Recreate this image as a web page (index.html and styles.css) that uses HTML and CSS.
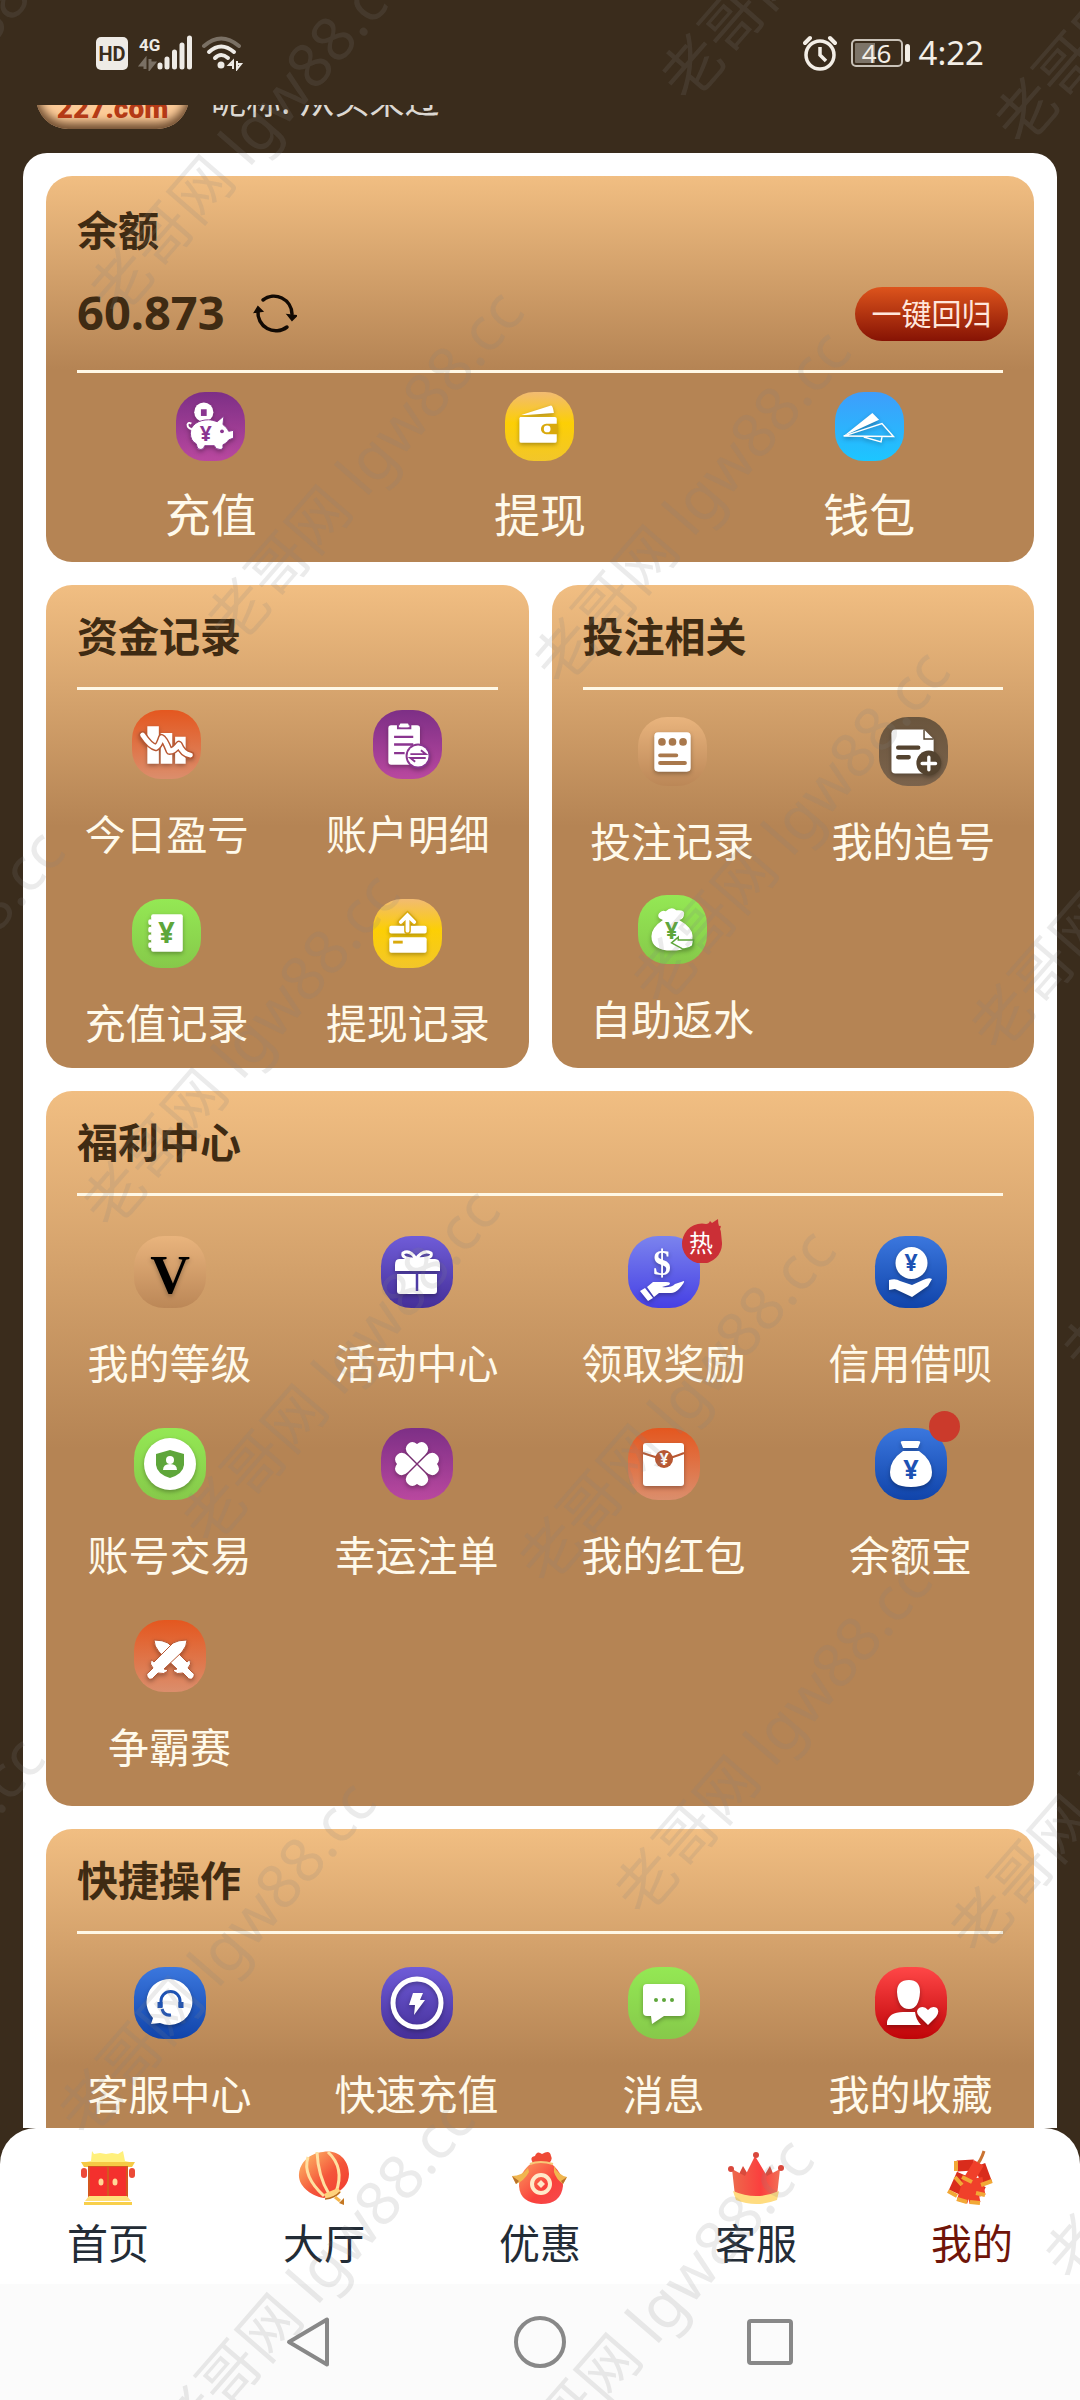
FILE: index.html
```html
<!DOCTYPE html>
<html lang="zh-CN">
<head>
<meta charset="utf-8">
<meta name="viewport" content="width=device-width, initial-scale=1">
<title>我的</title>
<link rel="stylesheet" href="styles.css">
</head>
<body>
<div class="screen">
  <header class="status">
    <div class="status-group">
      <svg class="status-icon" width="148" height="36" viewBox="0 0 148 36" role="img" aria-label="HD 4G Wi-Fi">
        <rect x="0" y="2" width="32" height="33" rx="5" fill="#eeebe6"/>
        <text class="hd" x="16" y="26" text-anchor="middle">HD</text>
        <text class="net" x="43" y="16">4G</text>
        <path d="M49 34V25L45 30H49M54 24V33L58 28H54" stroke="#7a7064" stroke-width="3" fill="none"/>
        <path d="M64 32V30M71 32V24M78.500 32V17M86 32V10M93.500 32V3" stroke="#eeebe6" stroke-width="5" stroke-linecap="round"/>
        <path d="M108 11Q125-4 143 11" stroke="#7a7064" stroke-width="4" fill="none" stroke-linecap="round"/>
        <path d="M113 17Q125 6 138 17M119 23Q125 17 132 23" stroke="#eeebe6" stroke-width="4" fill="none" stroke-linecap="round"/>
        <circle cx="125" cy="30" r="3.500" fill="#eeebe6"/>
        <path d="M137 34V26L133 30H137M141 26V34L145 29H141" stroke="#eeebe6" stroke-width="2" fill="none"/>
      </svg>
    </div>
    <div class="status-group">
      <svg class="status-icon" width="34" height="36" viewBox="0 0 34 36" role="img" aria-label="闹钟">
        <circle cx="17" cy="20" r="14" fill="none" stroke="#f3eee6" stroke-width="3.500"/>
        <path d="M17 12V20L23 26" fill="none" stroke="#f3eee6" stroke-width="3.500"/>
        <path d="M2 8L7 3M27 3L32 8" stroke="#f3eee6" stroke-width="4" stroke-linecap="round"/>
      </svg>
      <div class="battery"><span class="battery-box">46</span><span class="battery-tip"></span></div>
      <span class="clock">4:22</span>
    </div>
  </header>

  <main class="scroll">
    <div class="profile">
      <div class="logo">227.com</div>
      <div class="nickname">昵称: 从头来过</div>
    </div>

    <div class="panel">
      <section class="card balance">
        <h2>余额</h2>
        <div class="balance-row">
          <strong>60.873</strong>
          <button class="refresh" type="button" aria-label="刷新">
            <svg width="44" height="44" viewBox="0 0 44 44" fill="none" stroke="#120a04" stroke-width="3.500" stroke-linecap="round">
              <path d="M10 8A18 18 0 0 1 39 22M34 35A18 18 0 0 1 5 19"/>
              <path d="M2 20L5 15L9 19ZM35 23L39 28L43 24Z" fill="#120a04" stroke-width="2"/>
            </svg>
          </button>
          <button class="recall" type="button">一键回归</button>
        </div>
        <div class="items items-3">
          <a href="#"><svg class="icon purple" viewBox="0 0 72 72"><g class="glyph">
            <circle cx="29" cy="21" r="10"/><rect x="26" y="18" width="6" height="7" fill="currentColor"/>
            <path d="M15 43C15 34 24 29 34 29C37 29 40 30 43 31L50 25L49 34C52 36 54 39 55 41L60 40V48L55 50C53 53 51 54 49 55V58Q49 60 46 60Q41 60 40 56H30Q29 60 26 60Q22 60 22 57L21 54C17 52 15 48 15 43Z" stroke="currentColor" stroke-width="1"/>
            <path d="M17 39Q12 38 12 34Q13 31 16 33" fill="none" stroke="#fff" stroke-width="2"/><circle cx="48" cy="41" r="2" fill="currentColor"/></g>
            <text class="cur" x="31" y="51" font-size="22">¥</text></svg><span>充值</span></a>
          <a href="#"><svg class="icon yellow" viewBox="0 0 72 72"><g class="glyph">
            <path d="M17 24L48 14Q50 14 51 22L22 24ZM16 26H52Q54 26 54 28V51Q54 53 52 53H17Q15 53 15 51V27Z"/>
            <path d="M55 33H43A5 5 0 0 0 43 44H55Z" fill="currentColor"/><circle cx="44" cy="38.500" r="3.500"/></g></svg><span>提现</span></a>
          <a href="#"><svg class="icon sky" viewBox="0 0 72 72"><g class="glyph">
            <path d="M9 46L39 22L46 29Z"/>
            <path d="M9 46L49 33L61 46.500ZM30 47L48 52L49 47" fill="none" stroke="#fff" stroke-width="1.500"/></g></svg><span>钱包</span></a>
        </div>
      </section>

      <div class="pair">
        <section class="card funds">
          <h2>资金记录</h2>
          <div class="items items-2">
            <a href="#"><svg class="icon orange" viewBox="0 0 72 72"><g class="glyph">
              <path d="M16 17H28V56H16ZM30 24H42V56H30ZM45 28H56V56H45Z"/>
              <path d="M11 26Q19 38 25 39Q28 38 31 29Q34 30 39 43Q44 43 49 36Q53 46 61 47" fill="none" stroke="currentColor" stroke-width="8" stroke-linecap="round" stroke-linejoin="round"/>
              <path d="M11 26Q19 38 25 39Q28 38 31 29Q34 30 39 43Q44 43 49 36Q53 46 61 47" fill="none" stroke="#fff" stroke-width="5" stroke-linecap="round" stroke-linejoin="round"/></g></svg><span>今日盈亏</span></a>
            <a href="#"><svg class="icon purple" viewBox="0 0 72 72"><g class="glyph">
              <rect x="16" y="16" width="33" height="41" rx="3"/>
              <path d="M26 14V19H39V14" fill="none" stroke="currentColor" stroke-width="2"/><rect x="28" y="14" width="9" height="4" rx="1"/>
              <path d="M22 28H42M22 36H42M22 45H33" stroke="currentColor" stroke-width="2.500"/>
              <circle cx="47" cy="48" r="13" fill="currentColor"/><circle cx="47" cy="48" r="11"/>
              <path d="M39 46H55L50 42M55 50H39L44 54" fill="none" stroke="currentColor" stroke-width="2"/></g></svg><span>账户明细</span></a>
            <a href="#"><svg class="icon green" viewBox="0 0 72 72"><g class="glyph">
              <path d="M22 16H51Q53 16 53 18V53Q53 55 51 55H22Q20 55 20 53V18Q20 16 22 16Z"/>
              <path d="M19 23V25M19 31V33M19 39V41M19 47V49" stroke="#fff" stroke-width="4" stroke-linecap="round"/></g>
              <text class="cur" x="36" y="46" font-size="30">¥</text></svg><span>充值记录</span></a>
            <a href="#"><svg class="icon yellow" viewBox="0 0 72 72"><g class="glyph">
              <rect x="17" y="28" width="39" height="8" rx="2"/><rect x="17" y="40" width="39" height="16" rx="2"/>
              <path d="M21 45H31" stroke="currentColor" stroke-width="3"/>
              <path d="M36 33V19M29 24L36 17L43 24" fill="none" stroke="currentColor" stroke-width="7" stroke-linecap="round"/>
              <path d="M36 33V19M29 24L36 17L43 24" fill="none" stroke="#fff" stroke-width="4" stroke-linecap="round"/></g></svg><span>提现记录</span></a>
          </div>
        </section>
        <section class="card bets">
          <h2>投注相关</h2>
          <div class="items items-2">
            <a href="#"><svg class="icon tan" viewBox="0 0 72 72"><g class="glyph">
              <rect x="17" y="16" width="38" height="41" rx="4"/>
              <g fill="currentColor"><circle cx="25" cy="26" r="4"/><circle cx="36" cy="26" r="4"/><circle cx="47" cy="26" r="4"/></g>
              <path d="M23 40H40M23 48H49" stroke="currentColor" stroke-width="4" stroke-linecap="round"/></g></svg><span>投注记录</span></a>
            <a href="#"><svg class="icon taupe" viewBox="0 0 72 72"><g class="glyph">
              <path d="M17 13H47L57 23V55Q57 59 53 59H17Q13 59 13 55V17Q13 13 17 13Z"/>
              <path d="M47 13V23H57" fill="none" stroke="currentColor" stroke-width="1.500"/>
              <path d="M20 32H41M20 42H31" stroke="currentColor" stroke-width="4.500" stroke-linecap="round"/>
              <circle cx="52" cy="48" r="13" fill="currentColor"/><path d="M52 42V55M45 48.500H59" stroke="#fff" stroke-width="3.500" stroke-linecap="round"/></g></svg><span>我的追号</span></a>
            <a href="#"><svg class="icon green" viewBox="0 0 72 72"><g class="glyph">
              <path d="M26 26Q19 24 22 19Q25 15 29 17Q35 11 40 16Q49 15 48 20Q48 25 43 26Q57 34 57 43Q57 58 35 58Q14 58 14 43Q14 34 26 26Z"/>
              <path d="M35 50L42 44V47H58L57 53Q52 57 46 56Z" stroke="currentColor" stroke-width="1.500"/></g>
              <text class="cur" x="35" y="46" font-size="24">¥</text></svg><span>自助返水</span></a>
          </div>
        </section>
      </div>

      <section class="card welfare">
        <h2>福利中心</h2>
        <div class="items items-4">
          <a href="#"><svg class="icon tan" viewBox="0 0 72 72"><text class="vip glyph" x="36" y="57" font-size="55">V</text></svg><span>我的等级</span></a>
          <a href="#"><svg class="icon violet" viewBox="0 0 72 72"><g class="glyph">
            <path d="M18 23H54Q59 23 59 29V35H14V29Q14 23 18 23ZM16 38H56V55Q56 58 53 58H19Q16 58 16 55Z"/>
            <path d="M36 38V55" stroke="currentColor" stroke-width="2.500"/>
            <path d="M35 23Q20 23 22 17Q29 13 35 23Q42 13 50 17Q53 23 35 23Z" fill="none" stroke="#fff" stroke-width="3"/></g></svg><span>活动中心</span></a>
          <a href="#"><span class="badged"><svg class="icon indigo" viewBox="0 0 72 72"><g class="glyph">
            <text class="dollar" x="34" y="39" font-size="36">$</text>
            <path d="M12 55L17 52L25 62L20 65ZM19 51L25 46H38Q44 46 41 49L34 51Q43 52 47 48L56 45Q57 46 51 53Q47 57 43 57H31L26 61Z"/></g></svg>
            <span class="hot"><svg viewBox="0 0 41 44" aria-hidden="true"><path d="M25 5Q28 5 29 2L31 4L37 0Q37 4 38 7Q41 6 39 10Q40 12 40 14L41 24A20 20 0 1 1 25 5Z" fill="#cb2f36"/></svg><b>热</b></span></span><span>领取奖励</span></a>
          <a href="#"><svg class="icon blue" viewBox="0 0 72 72"><g class="glyph">
            <circle cx="36.500" cy="27" r="16"/>
            <path d="M14 44Q21 42 25 45L37 49L48 44Q54 41 57 43L53 50L37 61L20 53L14 54Z"/></g>
            <text class="cur" x="36" y="35" font-size="23">¥</text></svg><span>信用借呗</span></a>
          <a href="#"><svg class="icon green" viewBox="0 0 72 72"><g class="glyph">
            <circle cx="36" cy="36" r="26"/>
            <path d="M36 22L50 26V37Q49 46 36 50Q23 46 22 37V26Z" fill="currentColor"/>
            <circle cx="36" cy="32" r="4"/><path d="M29 42Q29 36 36 36Q43 36 43 42Z"/></g></svg><span>账号交易</span></a>
          <a href="#"><svg class="icon magenta" viewBox="0 0 72 72"><g class="glyph">
            <path id="leaf" d="M36 35L28 27Q22 21 27 16Q31 12 36 16Q41 12 45 16Q50 21 44 27Z"/>
            <use href="#leaf" transform="rotate(90 36 36)"/><use href="#leaf" transform="rotate(180 36 36)"/><use href="#leaf" transform="rotate(270 36 36)"/></g></svg><span>幸运注单</span></a>
          <a href="#"><svg class="icon orange" viewBox="0 0 72 72"><g class="glyph">
            <rect x="15" y="15" width="41" height="43" rx="3"/>
            <path d="M15 25Q29 30 36 31Q44 30 56 25" fill="none" stroke="currentColor" stroke-width="2"/>
            <circle cx="36" cy="31" r="9" fill="currentColor"/></g>
            <text class="cur light" x="36" y="37" font-size="16">¥</text></svg><span>我的红包</span></a>
          <a href="#"><span class="badged"><svg class="icon blue" viewBox="0 0 72 72"><g class="glyph">
            <path d="M26 15Q25 13 28 13H43Q46 13 45 15L43 20H28ZM28 23H44Q57 32 57 44Q57 59 36 59Q15 59 15 44Q15 32 28 23Z"/></g>
            <text class="cur" x="36" y="51" font-size="27">¥</text></svg><i class="dot"></i></span><span>余额宝</span></a>
          <a href="#"><svg class="icon orange" viewBox="0 0 72 72"><g class="glyph" stroke="currentColor" stroke-width="1">
            <path id="sword" d="M20 20Q29 20 34 23L53 42Q55 40 56 40Q58 44 54 48L58 52Q62 54 59 58Q56 61 53 57L49 53Q43 55 39 51Q40 49 43 49L25 32Q20 26 20 20Z"/>
            <use href="#sword" transform="matrix(-1 0 0 1 73 0)"/></g></svg><span>争霸赛</span></a>
        </div>
      </section>

      <section class="card quick">
        <h2>快捷操作</h2>
        <div class="items items-4">
          <a href="#"><svg class="icon blue" viewBox="0 0 72 72"><g class="glyph">
            <path d="M36 12A23 23 0 1 1 26 56L17 57L19 51A23 23 0 0 1 36 12Z"/>
            <path d="M27 40V34A9.500 9.500 0 0 1 46 34V40" fill="none" stroke="currentColor" stroke-width="3"/>
            <path d="M26 35V41M47 35V41" stroke="currentColor" stroke-width="5"/><path d="M28 42Q30 49 37 48" fill="none" stroke="currentColor" stroke-width="3"/></g></svg><span>客服中心</span></a>
          <a href="#"><svg class="icon violet" viewBox="0 0 72 72"><g class="glyph">
            <circle cx="36" cy="36" r="24" fill="none" stroke="#fff" stroke-width="5"/><path d="M32 26H42L39 33H44L33 48L34 38H28Z"/></g></svg><span>快速充值</span></a>
          <a href="#"><svg class="icon green" viewBox="0 0 72 72"><g class="glyph">
            <path d="M19 17H52Q57 17 57 21V45Q57 49 52 49H36L24 57L23 49H19Q15 49 15 45V21Q15 17 19 17Z"/>
            <g fill="currentColor"><circle cx="28" cy="33" r="2"/><circle cx="36" cy="33" r="2"/><circle cx="44" cy="33" r="2"/></g></g></svg><span>消息</span></a>
          <a href="#"><svg class="icon red" viewBox="0 0 72 72"><g class="glyph">
            <path d="M34 13Q45 13 45 25Q44 42 34 42Q23 42 22 25Q22 13 34 13ZM12 58V55Q14 45 28 45H40Q41 53 46 58Z"/>
            <path d="M53 58L44 49Q40 44 44 41Q49 38 53 43Q57 38 62 41Q65 45 61 50Z"/></g></svg><span>我的收藏</span></a>
        </div>
      </section>
    </div>
  </main>

  <div class="tabs-wrap">
    <nav class="tabs">
      <a href="#"><svg viewBox="0 0 56 56" aria-hidden="true">
        <path d="M12 1L14 4L20 3L26 4L32 3L38 4L43 1L45 11L54 13H1L11 11Z" fill="#fff07c"/>
        <path d="M1 12H55L52 17H4Z" fill="#f5c944"/><rect x="8" y="16" width="40" height="34" fill="#d4571f"/>
        <rect x="10" y="17" width="17" height="29" fill="#f4302d"/><rect x="29" y="17" width="17" height="29" fill="#f4302d"/>
        <path d="M9 46H47L51 51H5Z" fill="#ffe07a"/><rect x="4" y="52" width="48" height="3" fill="#f8cf4a"/>
        <rect x="1" y="18" width="6" height="10" rx="3" fill="#ec4a37"/><rect x="49" y="18" width="6" height="10" rx="3" fill="#ec4a37"/>
        <ellipse cx="21" cy="32" rx="2.500" ry="3.500" fill="#ffd996"/><ellipse cx="35" cy="32" rx="2.500" ry="3.500" fill="#ffd996"/></svg><span>首页</span></a>
      <a href="#"><svg viewBox="0 0 56 56" aria-hidden="true">
        <defs><linearGradient id="lantern" x1="0" y1="0" x2="1" y2="1"><stop offset="0" stop-color="#ffc46a"/><stop offset=".55" stop-color="#f4553a"/><stop offset="1" stop-color="#f2372f"/></linearGradient></defs>
        <path d="M27 2C42-1 53 10 53 24C53 34 46 41 36 45L28 48C12 45 2 34 3 24C4 12 14 3 27 2Z" fill="url(#lantern)"/>
        <path d="M12 7Q6 26 28 46M21 2Q22 26 33 44M32 2Q49 18 40 42" fill="none" stroke="#ffe0a0" stroke-width="3"/>
        <path d="M28 44L42 38L45 42Q38 49 30 49Z" fill="#ffd27c"/><path d="M29 49Q39 48 44 42" fill="none" stroke="#b76a21" stroke-width="1.500"/><path d="M39 47L44 51" stroke="#f6b64a" stroke-width="3"/><path d="M43 53L48 48V55Z" fill="#c47722"/></svg><span>大厅</span></a>
      <a href="#"><svg viewBox="0 0 56 56" aria-hidden="true">
        <defs><linearGradient id="bag" x1="0" y1="0" x2="1" y2="1"><stop offset="0" stop-color="#fb9b60"/><stop offset=".6" stop-color="#f9413b"/><stop offset="1" stop-color="#f64a50"/></linearGradient></defs>
        <path d="M21 13Q17 7 23 6Q25 0 30 4Q38-1 39 6Q41 10 37 13Z" fill="#ef4a36"/>
        <path d="M21 12H37Q51 22 51 36Q49 54 29 54Q8 53 7 36Q7 22 21 12Z" fill="url(#bag)"/>
        <path d="M18 14Q28 10 41 14" fill="none" stroke="#f8c777" stroke-width="2"/>
        <path d="M16 18Q10 26 0 26L4 34Q12 31 17 22M42 16Q46 25 55 27L51 34Q44 29 42 22" fill="#f0b650"/>
        <path d="M0 26L4 34L7 31ZM55 27L51 34L49 31Z" fill="#b9722a"/>
        <circle cx="29" cy="34" r="9" fill="none" stroke="#ffe9c9" stroke-width="4"/><path d="M29 30L33 34L29 38L25 34Z" fill="#ffe9c9"/></svg><span>优惠</span></a>
      <a href="#"><svg viewBox="0 0 56 56" aria-hidden="true">
        <defs><linearGradient id="crown" x1="0" y1="0" x2="1" y2="0"><stop offset="0" stop-color="#ed6a4c"/><stop offset=".6" stop-color="#fb3f3e"/><stop offset="1" stop-color="#f27056"/></linearGradient></defs>
        <path d="M10 26L15 16L21 26M36 26L42 16L46 26" fill="#d94a3c"/>
        <path d="M4 19L17 26L27 6L39 26L52 19L49 46Q28 52 7 46Z" fill="url(#crown)"/>
        <path d="M5 41Q28 51 51 41L49 50Q28 58 8 50Z" fill="#ffdc80"/>
        <circle cx="28" cy="5" r="3" fill="#d9483c"/><circle cx="3" cy="19" r="3" fill="#d9483c"/><circle cx="53" cy="18" r="3" fill="#d9483c"/></svg><span>客服</span></a>
      <a href="#" class="active" aria-current="page"><svg viewBox="0 0 56 56" aria-hidden="true">
        <path d="M31 17Q37 11 40 1" stroke="#c97332" stroke-width="3" fill="none"/>
        <g stroke-width="11" fill="none">
          <path d="M13 16L30 15M36 15L43 34M18 24L10 42M27 35L39 42" stroke="#d92c1c"/>
          <path d="M27 33L31 53M33 28L36 46M35 13L23 33M25 28L18 52" stroke="#f0402a"/>
        </g>
        <path d="M12 11V21M37 35L48 31M11 27L18 35M4 41L13 46M18 27L28 32M13 49L23 52M32 43L41 45M26 52L36 53" stroke="#f2a836" stroke-width="4"/></svg><span>我的</span></a>
    </nav>
  </div>

  <footer class="sysnav">
    <button type="button" aria-label="返回"><svg viewBox="0 0 56 56"><path d="M45 5.500V50.500L7 28Z"/></svg></button>
    <button type="button" aria-label="主页"><svg viewBox="0 0 56 56"><circle cx="28" cy="28" r="24"/></svg></button>
    <button type="button" aria-label="最近任务"><svg viewBox="0 0 56 56"><rect x="7" y="7" width="42" height="42" rx="2"/></svg></button>
  </footer>

  <svg class="watermark" aria-hidden="true">
    <g>
      <text transform="translate(-210 245) rotate(-49)">老哥网 lgw88.cc</text>
      <text transform="translate(117 287) rotate(-49)">老哥网 lgw88.cc</text>
      <text transform="translate(688 73) rotate(-49)">老哥网 lgw88.cc</text>
      <text transform="translate(1022 117) rotate(-49)">老哥网 lgw88.cc</text>
      <text transform="translate(234 617) rotate(-49)">老哥网 lgw88.cc</text>
      <text transform="translate(561 657) rotate(-49)">老哥网 lgw88.cc</text>
      <text transform="translate(660 977) rotate(-49)">老哥网 lgw88.cc</text>
      <text transform="translate(998 1023) rotate(-49)">老哥网 lgw88.cc</text>
      <text transform="translate(-225 1157) rotate(-49)">老哥网 lgw88.cc</text>
      <text transform="translate(110 1200) rotate(-49)">老哥网 lgw88.cc</text>
      <text transform="translate(1090 1347) rotate(-49)">老哥网 lgw88.cc</text>
      <text transform="translate(210 1516) rotate(-49)">老哥网 lgw88.cc</text>
      <text transform="translate(546 1556) rotate(-49)">老哥网 lgw88.cc</text>
      <text transform="translate(642 1887) rotate(-49)">老哥网 lgw88.cc</text>
      <text transform="translate(977 1926) rotate(-49)">老哥网 lgw88.cc</text>
      <text transform="translate(-245 2064) rotate(-49)">老哥网 lgw88.cc</text>
      <text transform="translate(86 2108) rotate(-49)">老哥网 lgw88.cc</text>
      <text transform="translate(1072 2253) rotate(-49)">老哥网 lgw88.cc</text>
      <text transform="translate(185 2425) rotate(-49)">老哥网 lgw88.cc</text>
      <text transform="translate(524 2465) rotate(-49)">老哥网 lgw88.cc</text>
    </g>
  </svg>
</div>
</body>
</html>
```
FILE: styles.css
```css
* { box-sizing: border-box; }

body {
  margin: 0;
  background: #3a2c1c;
  font-family: "Noto Sans", "Noto Sans CJK SC", sans-serif;
}

a { color: inherit; text-decoration: none; }

button {
  padding: 0;
  border: 0;
  background: none;
  font-family: inherit;
}

.screen {
  position: relative;
  display: flex;
  flex-direction: column;
  height: 100vh;
  overflow: hidden;
}

/* status bar */
.status {
  display: flex;
  justify-content: space-between;
  flex: none;
  height: 105px;
  padding: 35px 96px 0;
}

.status-group {
  display: flex;
  align-items: center;
  height: 36px;
}

.status-icon { display: block; }

.hd {
  font: 700 20px "Roboto", sans-serif;
  fill: #3a2c1c;
}

.net {
  font: 700 17px "Roboto", sans-serif;
  fill: #eeebe6;
}

.battery {
  display: flex;
  align-items: center;
  gap: 2px;
  margin: 0 9px 0 14px;
}

.battery-box {
  width: 52px;
  height: 28px;
  padding: 2px;
  border: 2px solid #c9c2b8;
  border-radius: 5px;
  background: linear-gradient(90deg, #7d7468 46%, transparent 46%) content-box;
  color: #f3eee6;
  font-size: 26px;
  line-height: 20px;
  text-align: center;
}

.battery-tip {
  width: 5px;
  height: 18px;
  border-radius: 3px;
  background: #f3eee6;
}

.clock {
  color: #f3eee6;
  font-size: 33px;
  line-height: 36px;
}

/* scrolled page */
.scroll {
  flex: 1;
  min-height: 0;
  overflow: hidden;
}

.profile {
  display: flex;
  align-items: flex-end;
  gap: 22px;
  height: 48px;
  padding: 0 36px 24px;
  overflow: hidden;
}

.logo {
  width: 153px;
  padding: 60px 0 4px;
  border-radius: 32px;
  background: #fccb98;
  box-shadow: inset 0 -4px 10px 2px #6d4c30;
  color: #b43a16;
  font: 900 28px/32px "Roboto", "Liberation Sans", sans-serif;
  text-align: center;
}

.nickname {
  color: #dcd8d2;
  font-size: 35px;
  line-height: 56px;
}

.panel {
  display: flex;
  flex-direction: column;
  gap: 23px;
  margin: 0 23px;
  padding: 23px;
  border-radius: 24px;
  background: #fff;
}

.card {
  flex: 1;
  border-radius: 26px;
  background: linear-gradient(#f1be82, #b58454 50%);
}

.card h2 {
  margin: 0 31px;
  border-bottom: 3px solid #fff8e6;
  color: #3f2b13;
  font-size: 41px;
  font-weight: 700;
  line-height: 102px;
}

.pair {
  display: flex;
  gap: 23px;
}

.balance { padding-top: 9px; }

.balance h2 {
  border: 0;
  line-height: 90px;
}

.balance-row {
  display: flex;
  align-items: center;
  height: 98px;
  margin: 0 31px;
  padding-bottom: 17px;
  border-bottom: 3px solid #fff8e6;
}

.balance-row strong {
  padding-bottom: 4px;
  color: #3f2b13;
  font-size: 47px;
  line-height: 60px;
}

.refresh {
  height: 44px;
  margin-left: 28px;
}

.recall {
  width: 153px;
  height: 54px;
  margin: 0 -5px 0 auto;
  border-radius: 27px;
  background: linear-gradient(#dd541c, #861304);
  color: #ffe6dc;
  font-size: 30px;
  line-height: 54px;
}

.items {
  display: grid;
  color: #fffaeb;
  font-size: 41px;
  line-height: 54px;
}

.items a {
  display: flex;
  flex-direction: column;
  align-items: center;
  gap: 28px;
}

.items-2 { grid-template-columns: repeat(2, 1fr); }
.items-4 { grid-template-columns: repeat(4, 1fr); }

.items-3 {
  grid-template-columns: repeat(3, 1fr);
  padding: 19px 0 17px;
  font-size: 46px;
  line-height: 62px;
}

.items-3 a { gap: 22px; }

.funds .items { row-gap: 38px; padding: 20px 0 18px; }
.bets .items { row-gap: 27px; padding: 27px 0 22px; }
.welfare .items { row-gap: 38px; padding: 40px 0 32px; }
.quick .items { padding: 33px 0 180px; }

/* app icons */
.icon {
  display: block;
  width: 69px;
  height: 69px;
  border-radius: 42%;
  fill: #fff;
}

.items-4 .icon { width: 72px; height: 72px; }

.glyph { filter: drop-shadow(0 2px 2px rgba(0, 0, 0, .3)); }

.purple, .magenta { background: linear-gradient(#7d2f86, #b9489f); color: #8a3590; }
.yellow { background: linear-gradient(#f2bb72, #fccf05 45%, #f2c62a); color: #d9a90c; }
.sky { background: linear-gradient(#3f9dfb, #1cc6ff); color: #2f9de8; }
.orange { background: linear-gradient(#e4571f, #db8e6c); color: #b85732; }
.green { background: linear-gradient(#94e854, #86c94a); color: #5ea63a; }
.tan { background: linear-gradient(#e9b47d, #bb8757); color: #a9784c; }
.taupe { background: linear-gradient(#6a553d, #7b634c); color: #54432f; }
.violet { background: linear-gradient(#6f5cd8, #452f98); color: #4d3aa4; }
.indigo { background: linear-gradient(#7b83ee, #4640e4); color: #4b46d8; }
.blue { background: linear-gradient(#3b77de, #1044aa); color: #1d52b4; }
.red { background: linear-gradient(#ff4747, #bf0408); color: #c0060a; }

.cur {
  fill: currentColor;
  font-family: "Noto Sans", sans-serif;
  font-weight: 700;
  text-anchor: middle;
}

.cur.light { fill: #fff; }

.vip {
  fill: #000;
  font-family: "Liberation Serif", serif;
  font-weight: 700;
  text-anchor: middle;
}

.dollar {
  font-family: "Liberation Serif", serif;
  font-weight: 700;
  text-anchor: middle;
}

.badged {
  position: relative;
  display: block;
}

.hot {
  position: absolute;
  top: -17px;
  right: -22px;
  width: 41px;
  height: 44px;
  color: #fff;
  font-size: 24px;
  line-height: 48px;
  text-align: center;
}

.hot svg {
  position: absolute;
  inset: 0;
}

.hot b {
  position: relative;
  font-weight: 400;
}

.dot {
  position: absolute;
  top: -17px;
  right: -13px;
  width: 31px;
  height: 31px;
  border-radius: 50%;
  background: #cb3a2b;
}

/* bottom tabs */
.tabs-wrap { flex: none; }

.tabs {
  display: grid;
  grid-template-columns: repeat(5, 1fr);
  padding: 22px 0 14px;
  border-radius: 36px 36px 0 0;
  background: #fff;
  color: #232c36;
  font-size: 41px;
  line-height: 54px;
}

.tabs a {
  display: flex;
  flex-direction: column;
  align-items: center;
  gap: 10px;
}

.tabs svg { width: 56px; height: 56px; }

.tabs .active { color: #701509; }

.sysnav {
  display: flex;
  flex: none;
  justify-content: center;
  align-items: center;
  gap: 174px;
  height: 116px;
  background: #fbfbfb;
}

.sysnav button { height: 56px; }

.sysnav svg {
  width: 56px;
  height: 56px;
  fill: none;
  stroke: #888;
  stroke-width: 4;
  stroke-linejoin: round;
}

/* site mark repeated across the page */
.watermark {
  position: absolute;
  inset: 0;
  width: 100%;
  height: 100%;
  pointer-events: none;
}

.watermark g {
  transform: translate(1px, 32px);
  fill: rgba(128, 128, 128, .16);
  font-size: 61px;
}
```
